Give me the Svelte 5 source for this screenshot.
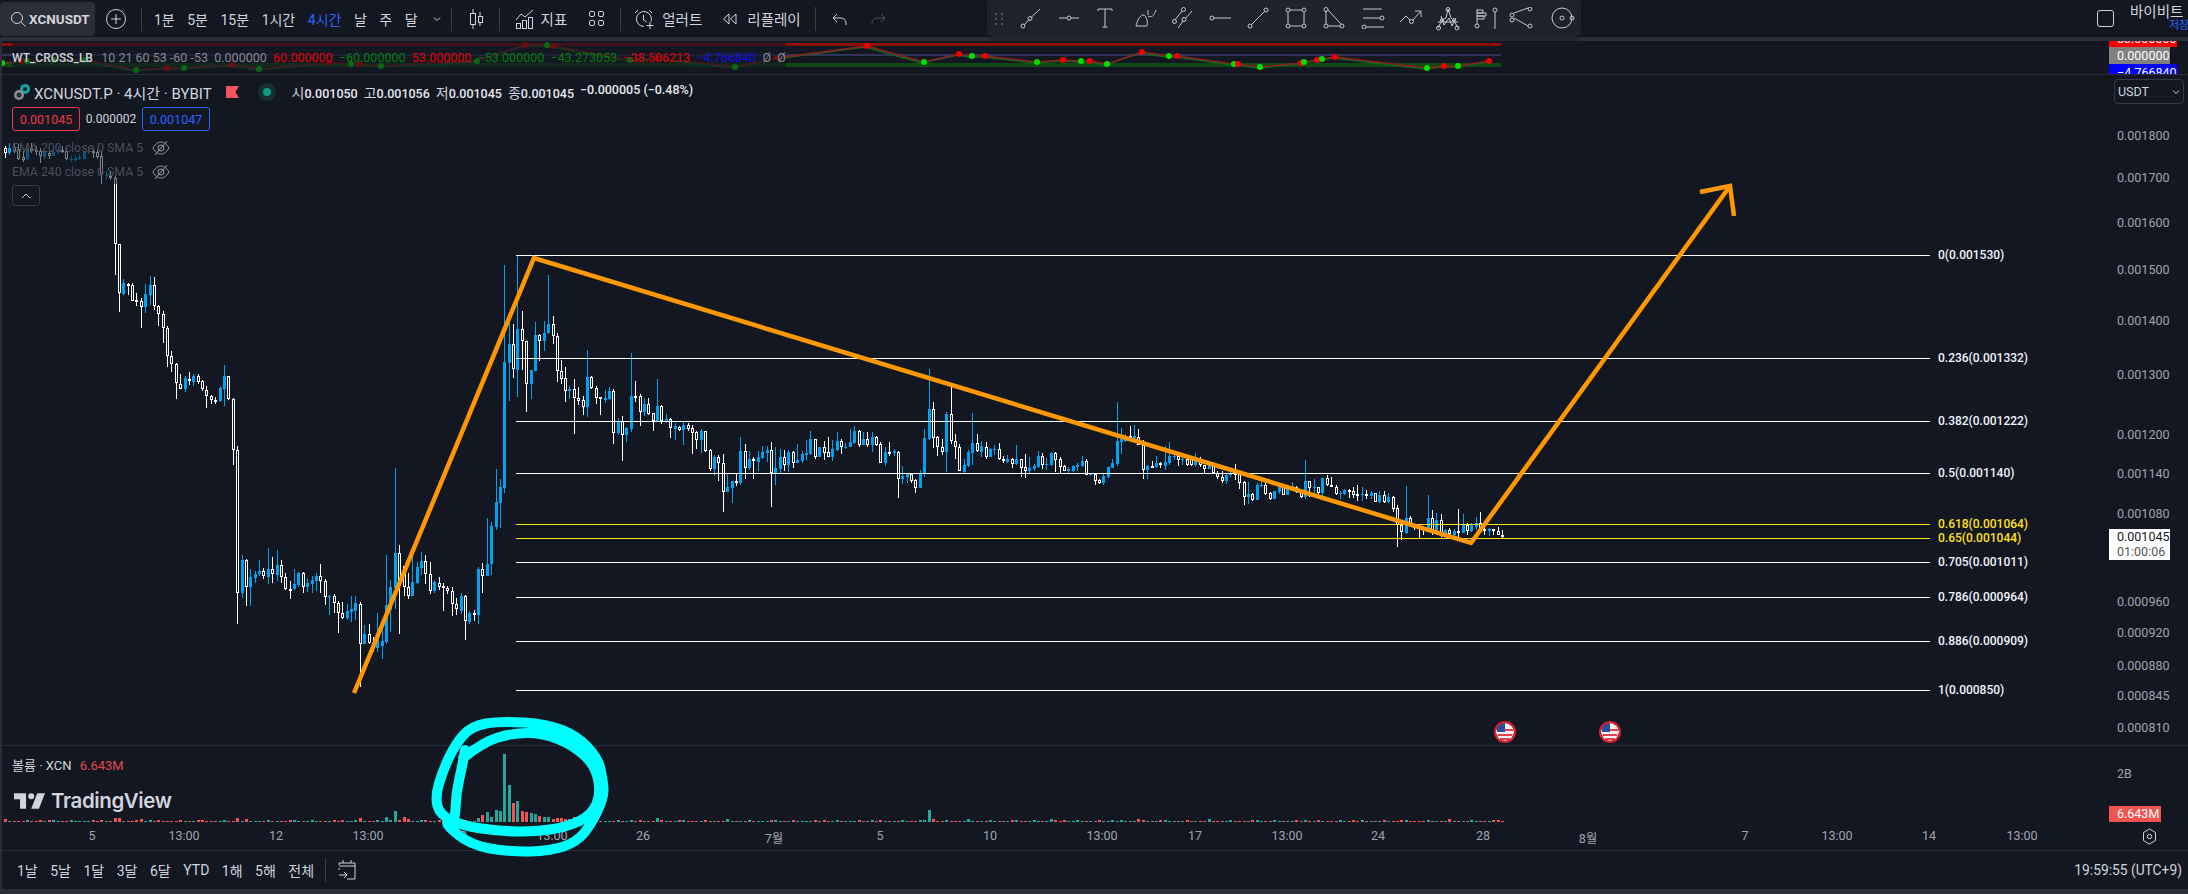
<script>
	// Candle data read off the chart: type, body top, body bottom, high, low
	const seg1 = `W50,64,45,78 B50,64,35,70 W48,58,40,65 W52,80,40,85 W76,84,60,90 B52,82,50,84 W50,58,35,65 W55,60,45,70 W58,74,50,92 B62,76,55,80 W63,72,58,80 B62,72,55,74 B55,62,45,68 W55,58,45,65 W60,82,50,85 B80,83,72,90 B78,84,70,90 B76,82,66,84 B62,80,58,82 B58,62,48,66 W60,62,52,78 W62,76,55,82 W74,122,60,150 B125,128,115,140 W128,134,115,140 W134,320,130,405 W320,455,320,510 B428,458,418,462 W430,436,428,462 W435,478,428,480 W476,480,455,492 W480,495,470,553 B460,496,432,512 B435,462,408,490 W435,492,412,505 W492,516,490,548 W516,555,508,596 W555,632,550,664 W632,656,618,678 W656,708,652,752 W710,724,684,724 B695,724,688,734 W696,704,678,714 B690,706,682,716 W690,706,684,712 W704,726,700,732 W727,744,718,777 W744,756,742,766 W755,762,748,768 B722,760,716,762 B690,724,658,772 W690,752,688,756 W752,895,750,938 W895,1295,885,1382 B1205,1295,1190,1310 W1205,1280,1200,1332 B1252,1280,1230,1332 B1244,1254,1235,1268 B1236,1244,1205,1248 W1236,1250,1225,1258 B1230,1252,1170,1272 W1230,1244,1195,1268 B1218,1246,1176,1262 W1218,1252,1205,1268 W1252,1286,1240,1288 W1284,1286,1262,1312 B1272,1286,1230,1288 B1240,1274,1238,1280 W1240,1280,1238,1296 B1268,1280,1255,1294 B1260,1272,1250,1296 B1250,1264,1240,1292 W1250,1262,1216,1296 W1262,1308,1258,1330 B1304,1308,1302,1358 W1304,1324,1298,1352 W1324,1352,1318,1408 W1352,1366,1322,1370 B1348,1366,1328,1372 B1342,1350,1304,1378 B1324,1346,1306,1372 W1326,1438,1322,1560 B1412,1438,1386,1438 W1412,1436,1384,1438 W1436,1450,1420,1462 B1416,1450,1352,1462 B1430,1446,1390,1480 B1330,1434,1190,1438 B1280,1345,1260,1406 B1185,1282,946,1340 W1185,1276,1162,1410 W1222,1280,1220,1306 W1280,1304,1240,1312 B1266,1304,1185,1306 B1224,1268,1210,1270 B1206,1226,1182,1246 W1208,1244,1190,1270 W1244,1292,1210,1298 B1266,1292,1260,1296 W1268,1280,1252,1288 W1278,1280,1268,1346 W1282,1290,1276,1300 W1290,1326,1280,1360 W1326,1342,1310,1358 B1304,1346,1296,1354 W1306,1376,1302,1428 B1352,1378,1348,1382 W1352,1356,1344,1376 B1230,1358,1224,1382 W1230,1248,1212,1296 B1214,1248,1086,1250 B1110,1214,1098,1246 B1042,1112,950,1120 B1000,1044,976,1114 B650,1002,378,1016 B600,652,535,758 W600,670,542,695 B558,672,350,748 W558,592,508,672 W592,710,592,790 B672,710,672,752 B575,675,538,674 W575,590,572,648 B568,592,535,620 B544,568,406,570 W544,576,520,600 W576,676,568,706`;
	const seg2 = `W363,386,330,402 W384,422,352,456 B418,422,408,448 W418,445,388,552 W445,452,412,464 W450,470,438,496 B381,470,300,500 W381,415,378,418 W415,444,408,462 W442,448,440,495 B445,450,420,458 B423,446,410,450 W423,548,418,582 B514,548,505,556 W514,555,498,632 B534,555,530,576 B438,537,310,545 W438,440,393,456 W438,486,432,528 B462,486,445,498 W463,492,445,496 W490,514,488,542 B468,514,388,516 W468,514,466,522 B508,516,492,520 W508,535,505,565 B528,538,518,570 W530,540,527,542 B526,540,516,584 W526,536,520,542 W535,548,525,612 W546,570,542,597 B544,570,538,610 W544,603,542,606 W600,656,598,664 B622,656,615,678 W622,638,615,692 W638,725,612,786 B712,725,672,727 B694,714,692,758 W693,697,672,708 B604,698,562,705 W604,654,582,686 B628,654,604,660 W628,634,620,686 B622,636,604,662 B606,624,588,626 B600,608,588,636 W601,668,576,770 B655,670,592,704 B622,656,596,668 W622,644,600,664 B606,644,600,665 W606,638,604,654 B630,638,582,640 B612,634,604,640 B610,614,570,630 B568,612,544,614 W568,622,566,626 B592,620,590,622 W592,608,574,630 W606,620,560,622 B598,622,570,632 B573,600,546,602 W574,590,566,612 B590,594,578,598 B576,590,538,592 B544,578,528,582 W544,584,540,592 B568,584,546,586 W568,584,545,592 B560,586,546,606 W562,584,558,588 W582,638,575,640 B606,638,590,648 W606,608,576,618 B604,608,598,618 W606,686,603,744 B678,686,648,702 B670,682,668,698 W672,692,668,698 W690,713,688,728 B670,713,660,715 B564,672,538,680 B477,567,358,570 W478,564,456,594 W562,590,558,618 W590,606,568,614 B492,606,486,665 W492,574,405,582 W574,590,552,626 W590,662,582,664 B645,665,628,668 B606,648,600,650 B580,608,490,645 W580,602,552,605 B588,606,574,620 W590,620,576,626 B596,620,594,622 B597,600,584,614 W598,628,578,630 W628,634,618,638 B628,636,616,638 W628,642,624,654 B628,642,586,644 W628,654,626,680 W652,662,612,684 B655,664,620,672 B648,658,642,664 B618,652,602,654`;
	const seg3 = `W318,346,310,358 B342,345,324,360 B309,346,306,348 W310,330,306,366 W328,350,322,370 W348,362,344,364 B358,362,352,370 B348,362,346,366 B346,350,340,362 B333,348,318,350 W333,374,326,376 B372,374,368,378 W372,392,370,405 W390,398,386,402 B378,400,372,404 B351,380,348,384 B340,354,328,355 B273,342,156,348 B268,276,234,312 B258,272,252,276 W258,262,228,264 B258,264,225,268 W260,284,237,286 W284,360,270,387 B348,360,346,387 W348,350,333,354 B340,352,318,354 W340,346,336,354 B336,348,288,360 B318,340,276,345 B318,320,305,331 W319,330,316,348 B326,328,322,345 W327,346,324,348 W327,346,322,348 B326,346,310,350 W326,346,322,350 W346,356,344,370 B338,356,332,358 W340,370,336,372 W368,382,362,386 W382,392,364,398 B374,394,370,402 B368,376,362,382 W370,372,342,390 W372,398,368,416 W396,440,394,464 B432,440,396,462 W432,450,428,454 B405,450,398,450 B405,408,390,412 W406,432,400,436 W430,446,426,450 B424,446,422,448 B406,426,402,432 W406,434,404,436 B416,434,404,436 B408,420,396,424 W410,426,408,430 W424,440,420,444 B393,440,330,446 W394,414,392,440 B410,414,388,430 W412,430,410,438 B385,430,384,442 W385,405,376,408 W404,410,380,412 W410,432,406,436 B428,432,422,446 B420,432,418,436 W421,424,418,444 W424,434,410,444 W433,436,405,452 B432,436,412,454 W433,436,420,448 B428,438,422,446 W430,455,428,457 B434,456,422,458 W435,455,424,458 B442,456,430,458 W442,476,438,486 W475,525,466,590 W525,545,522,570 B504,548,408,552 W505,527,498,530 W527,530,522,540 W530,536,524,566 W534,540,532,555 B504,540,435,544 W505,540,480,554 B510,546,490,552 W511,552,492,560 B540,552,538,558 W540,553,534,556 B543,555,538,570 W544,547,477,564 B525,548,492,550 W526,542,520,554 B526,542,520,546 B520,530,502,540 W520,540,486,540 W538,540,534,554 B537,542,534,558 W538,544,536,554 W544,554,532,556 W554,562,540,564`;

	function parseSeg(str, startX, originY, scaleY) {
		const py = (v) => Math.round(originY + v / scaleY);
		return str.split(' ').map((item, j) => {
			const [t, b, h, l] = item.slice(1).split(',').map(Number);
			const x = startX + j * 4.38;
			return { up: item[0] === 'B', x, ix: Math.round(x), t: py(t), b: py(b), h: py(h), l: py(l) };
		});
	}

	const candles = [
		...parseSeg(seg1, 5, 130, 2.8),
		...parseSeg(seg2, 560.7, 250, 3),
		...parseSeg(seg3, 1042.1, 350, 3)
	];

	// bars that stand out in the volume pane: x position and height
	const volPeaks = [[40,2],[114,4],[118,4],[139,3],[235,4],[358,4],[385,5],[394,11],[403,5],[407,3],[425,2],[477.700,4],[481.700,7],[486.700,10],[490.700,5],[495.300,12],[499.300,11],[503.700,68],[508.300,37],[512.700,19],[516.700,21],[521,11],[525.700,10],[529.700,9],[534.300,8],[538.700,6],[543,5],[547.700,5],[551.700,3],[556,4],[560.700,4],[565,3],[569.300,3],[573.700,5],[578.300,3],[657,4],[929,12],[933,3],[1050,3],[1140,3]];
	const volumes = candles.map((c, i) => {
		let best = null;
		for (const p of volPeaks) {
			const dist = Math.abs(p[0] - c.x);
			if (dist <= 2.2 && (!best || dist < best.dist)) best = { dist, h: p[1] };
		}
		const h = best ? best.h : 1 + ((i * 7) % 5 === 0 ? 1 : 0) + ((i * 13) % 11 === 0 ? 1 : 0);
		return { x: c.ix - 1, h, up: c.up };
	});

	const fibs = [
		{ y: 255, label: '0(0.001530)' },
		{ y: 358, label: '0.236(0.001332)' },
		{ y: 421, label: '0.382(0.001222)' },
		{ y: 473, label: '0.5(0.001140)' },
		{ y: 524, label: '0.618(0.001064)', gold: true },
		{ y: 538, label: '0.65(0.001044)', gold: true },
		{ y: 562, label: '0.705(0.001011)' },
		{ y: 597, label: '0.786(0.000964)' },
		{ y: 641, label: '0.886(0.000909)' },
		{ y: 690, label: '1(0.000850)' }
	];

	const prices = [
		['0.001800', 135], ['0.001700', 177], ['0.001600', 222], ['0.001500', 269], ['0.001400', 320],
		['0.001300', 374], ['0.001200', 434], ['0.001140', 473], ['0.001080', 513], ['0.000960', 601],
		['0.000920', 632], ['0.000880', 665], ['0.000845', 695], ['0.000810', 727]
	];

	const times = [
		['5', 92], ['13:00', 184], ['12', 276], ['13:00', 368], ['19', 460], ['13:00', 552], ['26', 643],
		['7월', 774], ['5', 880], ['10', 990], ['13:00', 1102], ['17', 1195], ['13:00', 1287], ['24', 1378],
		['28', 1483], ['8월', 1588], ['7', 1745], ['13:00', 1837], ['14', 1929], ['13:00', 2022]
	];

	const wtDots = [
		[2,63,'g'],[22,61,'r'],[27,61,'g'],[54,60,'g'],[84,60,'g'],[136,70,'g'],[167,68,'r'],[184,68,'g'],[232,65,'r'],[259,69,'g'],
		[329,63,'r'],[351,64,'g'],[359,64,'r'],[381,66,'g'],[477,61,'g'],[525,45,'r'],[547,45,'g'],[553,46,'r'],[630,60,'g'],[657,58,'r'],
		[735,67,'g'],[777,58,'r'],[867,46,'r'],[924,62,'g'],[959,54,'r'],[972,56,'g'],[985,56,'r'],[1037,62,'g'],[1063,60,'r'],[1081,61,'g'],
		[1090,61,'r'],[1107,64,'g'],[1142,52,'r'],[1169,56,'g'],[1177,56,'r'],[1234,64,'g'],[1238,64,'r'],[1260,67,'g'],[1301,63,'r'],[1304,62,'g'],
		[1317,60,'r'],[1322,59,'g'],[1335,57,'r'],[1427,68,'g'],[1444,66,'r'],[1458,66,'g'],[1489,61,'r']
	];
	const wtPath = 'M' + wtDots.map((d) => `${d[0]} ${d[1]}`).join('L');

	const intervals = ['1분', '5분', '15분', '1시간', '4시간', '날', '주', '달'];
	const ranges = ['1날', '5날', '1달', '3달', '6달', 'YTD', '1해', '5해', '전체'];
	const wtValues = [
		['0.000000', 'grey'], ['60.000000', 'red'], ['−60.000000', 'green'], ['53.000000', 'red'],
		['−53.000000', 'green'], ['−43.273053', 'green'], ['−38.506213', 'red'], ['−4.766840', 'blue'], ['Ø', 'grey'], ['Ø', 'grey']
	];

	// hand drawn circle around the volume spike
	const scribble = [[463,758],[483,742],[513,733],[543,733],[573,745],[595,765],[601,793],[592,815],[567,827],[533,832],[500,831],[463,826],[440,815],[435,797],[443,770],[456,743],[472,726],[500,721],[547,724],[577,736],[598,758],[603,780],[604,797],[592,823],[577,842],[550,851],[510,852],[470,845],[443,822],[455,823],[456,793],[463,763],[467,737]];
	function smooth(pts) {
		let d = `M${pts[0][0]} ${pts[0][1]}`;
		for (let i = 1; i < pts.length - 1; i++) {
			const mx = (pts[i][0] + pts[i + 1][0]) / 2;
			const my = (pts[i][1] + pts[i + 1][1]) / 2;
			d += `Q${pts[i][0]} ${pts[i][1]} ${mx} ${my}`;
		}
		return d;
	}
	const scribblePath = smooth(scribble);
</script>

<div class="page">
	<header class="topbar">
		<div class="search">
			<svg width="16" height="16" viewBox="0 0 16 16"><circle cx="7" cy="7" r="5.5" /><path d="M11 11l4.500 4.500" /></svg>
			<span>XCNUSDT</span>
		</div>
		<svg class="plus" width="20" height="20" viewBox="0 0 20 20"><circle cx="10" cy="10" r="9.500" /><path d="M10 5v10M5 10h10" /></svg>
		<i class="sep first"></i>
		<div class="intervals">
			{#each intervals as item}
				<span class:active={item === '4시간'}>{item}</span>
			{/each}
		</div>
		<svg class="chev" width="10" height="10" viewBox="0 0 10 10"><path d="M2 3.500l3 3 3-3" /></svg>
		<i class="sep tight"></i>
		<svg class="ico candle-ico" width="16" height="20" viewBox="0 0 16 20"><path d="M4 0v4M4 16v4M11 3v4M11 13v4" /><rect x="1.500" y="4.500" width="5" height="11" /><rect x="9.500" y="7.500" width="4" height="6" /></svg>
		<i class="sep tight"></i>
		<svg class="ico ind-ico" width="20" height="20" viewBox="0 0 20 20"><path d="M1 11l5-6 4 3 8-7" /><rect x="1.500" y="14.500" width="4" height="5" /><rect x="7.500" y="11.500" width="4" height="8" /><rect x="13.500" y="8.500" width="4" height="11" /></svg>
		<span class="label ind-label">지표</span>
		<svg class="ico grid-ico" width="17" height="17" viewBox="0 0 17 17"><rect x="1.500" y="1.500" width="5" height="5" rx="1.500" /><rect x="10.500" y="1.500" width="5" height="5" rx="1.500" /><rect x="1.500" y="10.500" width="5" height="5" rx="1.500" /><rect x="10.500" y="10.500" width="5" height="5" rx="1.500" /></svg>
		<i class="sep alert-sep"></i>
		<svg class="ico alert-ico" width="21" height="20" viewBox="0 0 21 20"><path d="M10 17.500a7.500 7.500 0 1 1 7-5M9.500 6v5l3 2M1 4l3-3M15 1l3 3M16 13v7M12.500 16.500h7" /></svg>
		<span class="label alert-label">얼러트</span>
		<svg class="ico replay-ico" width="15" height="12" viewBox="0 0 15 12"><path d="M7 1L1.500 6 7 11zM14 1L8.500 6 14 11z" /></svg>
		<span class="label replay-label">리플레이</span>
		<i class="sep undo-sep"></i>
		<svg class="ico undo-ico" width="15" height="12" viewBox="0 0 15 12"><path d="M5 1L1 5l4 4M1 5h8a5 5 0 0 1 5 5v2" /></svg>
		<svg class="ico redo-ico" width="15" height="12" viewBox="0 0 15 12"><path d="M10 1l4 4-4 4M14 5H6a5 5 0 0 0-5 5v2" /></svg>

		<div class="account">
			<i class="checkbox"></i>
			<div class="account-text">
				<span>바이비트</span>
				<span class="saved">저장</span>
			</div>
		</div>

		<nav class="drawbar">
			<svg class="grip" width="8" height="14" viewBox="0 0 8 14"><path d="M0 1h2v2H0zM6 1h2v2H6zM0 6h2v2H0zM6 6h2v2H6zM0 11h2v2H0zM6 11h2v2H6z" /></svg>
			<svg style="left:33px" width="22" height="22" viewBox="0 0 22 22"><path d="M4 18L9 12.500M11 10.500L20 2" /><circle cx="3" cy="19" r="2" /><circle cx="10" cy="11.500" r="2" /></svg>
			<svg style="left:71px" width="22" height="22" viewBox="0 0 22 22"><path d="M1 11h8M13 11h8" /><circle cx="11" cy="11" r="2" /></svg>
			<svg style="left:110px" width="16" height="22" viewBox="0 0 16 22"><path d="M1 4V2h14v2M8 2v18M5.500 20h5" /></svg>
			<svg style="left:147px" width="24" height="22" viewBox="0 0 24 22"><path d="M2 19h11c1-6-1-11-4-11-4 1-6 7-7 11zM14 9c3 2 6 0 8-6M14 3c0 2 0 4 0 5" /></svg>
			<svg style="left:185px" width="22" height="22" viewBox="0 0 22 22"><path d="M3 13L10 4M6 21l5-7M13 12l7-8" /><circle cx="2.500" cy="14.500" r="2" /><circle cx="11.500" cy="2.500" r="2" /><circle cx="12" cy="12.500" r="2" /></svg>
			<svg style="left:222px" width="22" height="22" viewBox="0 0 22 22"><path d="M5 11h17" /><circle cx="3" cy="11" r="2" /></svg>
			<svg style="left:260px" width="22" height="22" viewBox="0 0 22 22"><path d="M4 18L18 4" /><circle cx="3" cy="19" r="2" /><circle cx="19" cy="3" r="2" /></svg>
			<svg style="left:298px" width="22" height="22" viewBox="0 0 22 22"><path d="M5 3h12M5 19h12M3 5v12M19 5v12" /><circle cx="3" cy="3" r="2" /><circle cx="19" cy="3" r="2" /><circle cx="3" cy="19" r="2" /><circle cx="19" cy="19" r="2" /></svg>
			<svg style="left:336px" width="22" height="22" viewBox="0 0 22 22"><path d="M3 4v13M5 19h12M5 3l13 14" /><circle cx="3" cy="2.500" r="2" /><circle cx="3" cy="19" r="2" /><circle cx="19" cy="19" r="2" /></svg>
			<svg style="left:374px" width="24" height="22" viewBox="0 0 24 22"><path d="M3 2h18M2 11h17M5 20h18M2 2h1" /><circle cx="21" cy="11" r="2" /><circle cx="3" cy="20" r="2" /></svg>
			<svg style="left:412px" width="24" height="22" viewBox="0 0 24 22"><path d="M1 15l6-6 4 4M14 13l7-8M16 4h6v6" /><circle cx="12.500" cy="14.500" r="2" /></svg>
			<svg style="left:449px" width="24" height="24" viewBox="0 0 24 24"><path d="M2 21l4-8 4-2 2-9 3 9 3 3 4 7M2 15h20M5 9l3 9 5-7 3 8 4-8" /><circle cx="12" cy="2.500" r="2" /><circle cx="2.500" cy="21" r="2" /><circle cx="21" cy="21" r="2" /><circle cx="6" cy="13" r="1.500" /><circle cx="18" cy="13" r="1.500" /></svg>
			<svg style="left:487px" width="14" height="22" viewBox="0 0 14 22"><path d="M3 17V2M3 3h6v3H3M3 6h9v3H3M3 9h7v3H3" /><circle cx="3" cy="19" r="2" /></svg>
			<svg style="left:504px" width="8" height="22" viewBox="0 0 8 22"><path d="M4 5v17" /><circle cx="4" cy="3" r="2" /></svg>
			<svg style="left:522px" width="24" height="22" viewBox="0 0 24 22"><path d="M5 6l14-5M5 11l14 8" /><circle cx="3" cy="8" r="2" /><circle cx="3" cy="13" r="2" /><circle cx="21" cy="2" r="2" /><circle cx="21" cy="19" r="2" /></svg>
			<svg style="left:564px" width="24" height="22" viewBox="0 0 24 22"><circle cx="11" cy="11" r="10" /><circle cx="11" cy="11" r="2" /><circle cx="21" cy="11" r="2" /></svg>
		</nav>
	</header>

	<div class="panes">
		<section class="row wt">
			<div class="plot">
				<svg class="canvas" viewBox="2 41 2107 33" width="2107" height="33">
					<rect x="2" y="43" width="1499" height="3" fill="#8c0b0b" />
					<rect x="2" y="63" width="1499" height="4" fill="#0d4a14" />
					<path d="M2 55H1501" stroke="#3a3f70" stroke-width="1.500" />
					<path d={wtPath} transform="translate(-2 1)" fill="none" stroke="#0b6a1e" stroke-width="1.500" />
					<path d={wtPath} fill="none" stroke="#8e1f1f" stroke-width="1.500" />
					{#each wtDots as d}
						<circle cx={d[0]} cy={d[1]} r="3" fill={d[2] === 'r' ? '#f00000' : '#00e000'} />
					{/each}
				</svg>
				<div class="wt-legend">
					<b>WT_CROSS_LB</b>
					<span class="wt-params">10 21 60 53 -60 -53</span>
					{#each wtValues as v}
						<span class={v[1]}>{v[0]}</span>
					{/each}
				</div>
			</div>
			<div class="axis">
				<span class="wt-tag tag-red">53.000000</span>
				<span class="wt-tag tag-blue">−4.766840</span>
				<span class="wt-tag tag-grey">0.000000</span>
			</div>
		</section>

		<section class="row main">
			<div class="plot">
				<svg class="canvas" viewBox="2 75 2107 670" width="2107" height="670">
					{#each candles as c}
						<path d="M{c.ix + 0.5} {c.h}V{c.l}" class={c.up ? 'wick up' : 'wick'} />
						{#if c.up}
							<rect x={c.ix - 1} y={c.t} width="3" height={Math.max(c.b - c.t, 1)} class="body-up" />
						{:else}
							<rect x={c.ix - 0.5} y={c.t + 0.5} width="2" height={Math.max(c.b - c.t - 1, 1)} class="body-down" />
						{/if}
					{/each}
					{#each fibs as f}
						<path d="M516 {f.y + 0.5}H1930" class="fib" class:gold={f.gold} />
						<text x="1938" y={f.y + 4} class="fib-text" class:gold={f.gold}>{f.label}</text>
					{/each}
					{#each [1505, 1610] as fx}
						<g transform="translate({fx} 732)">
							<circle r="9" fill="#f4f4f4" />
							<path d="M-8 -2H8M-7.500 3H7.500M-5 7H5" stroke="#e2434b" stroke-width="2" />
							<path d="M-8 -5a9 9 0 0 1 8 -4V0H-8z" fill="#2b4fa0" />
							<circle r="10" fill="none" stroke="#d9202f" stroke-width="2" />
						</g>
					{/each}
				</svg>

				<div class="legend">
					<div class="symbol-row">
						<svg class="coin" width="18" height="18" viewBox="0 0 18 18"><circle cx="12" cy="6" r="5" fill="#12a5a0" /><circle cx="12" cy="6" r="2" fill="#131722" /><circle cx="6" cy="12" r="5" fill="#8a8e99" /><circle cx="6" cy="12" r="2.500" fill="#2a2e39" /></svg>
						<span class="symbol">XCNUSDT.P · 4시간 · BYBIT</span>
						<svg class="flag" width="13" height="12" viewBox="0 0 13 12"><path d="M0 0h13L9.500 6 13 12H0z" fill="#f7525f" /></svg>
						<span class="status"><i></i></span>
						<span class="ohlc">
							<span>시<b>0.001050</b></span>
							<span>고<b>0.001056</b></span>
							<span>저<b>0.001045</b></span>
							<span>종<b>0.001045</b></span>
							<b>−0.000005 (−0.48%)</b>
						</span>
					</div>
					<div class="quote-row">
						<span class="chip sell">0.001045</span>
						<span class="spread">0.000002</span>
						<span class="chip buy">0.001047</span>
					</div>
					<div class="study">
						<span>EMA 200 close 0 SMA 5</span>
						<svg width="18" height="18" viewBox="0 0 18 18"><path d="M1 9c3-5 6-6 8-6s5 1 8 6c-3 5-6 6-8 6s-5-1-8-6z" /><circle cx="9" cy="9" r="3" /><path d="M3 16L15 2" /></svg>
					</div>
					<div class="study">
						<span>EMA 240 close 0 SMA 5</span>
						<svg width="18" height="18" viewBox="0 0 18 18"><path d="M1 9c3-5 6-6 8-6s5 1 8 6c-3 5-6 6-8 6s-5-1-8-6z" /><circle cx="9" cy="9" r="3" /><path d="M3 16L15 2" /></svg>
					</div>
					<button class="collapse" aria-label="접기">
						<svg width="10" height="6" viewBox="0 0 10 6"><path d="M1 5l4-4 4 4" /></svg>
					</button>
				</div>
			</div>
			<div class="axis">
				<div class="unit">USDT <svg width="8" height="6" viewBox="0 0 8 6"><path d="M1 1.500l3 3 3-3" /></svg></div>
				{#each prices as p}
					<span class="price" style="top:{p[1] - 75}px">{p[0]}</span>
				{/each}
				<div class="last">
					<span>0.001045</span>
					<span class="countdown">01:00:06</span>
				</div>
			</div>
		</section>

		<section class="row vol">
			<div class="plot">
				<svg class="canvas" viewBox="2 746 2107 76" width="2107" height="76">
					{#each volumes as v}
						<rect x={v.x} y={822 - v.h} width="3" height={v.h} fill={v.up ? '#26a69a' : '#f05350'} />
					{/each}
				</svg>
				<div class="vol-legend">볼륨 · XCN <span>6.643M</span></div>
				<div class="watermark">
					<svg width="31" height="16" viewBox="0 0 36 18"><path d="M0 0h14v18H7V7H0zM27 0h9l-7 18h-9z" fill="#d1d4dc" /><circle cx="20" cy="3.500" r="3.500" fill="#d1d4dc" /></svg>
					<span>TradingView</span>
				</div>
			</div>
			<div class="axis">
				<span class="vol-scale">2B</span>
				<span class="vol-tag">6.643M</span>
			</div>
		</section>

		<section class="row timeaxis">
			<div class="plot">
				{#each times as t}
					<span class="time" style="left:{t[1] - 2}px">{t[0]}</span>
				{/each}
			</div>
			<div class="axis">
				<svg class="gear" width="15" height="17" viewBox="0 0 15 17"><path d="M7.500 1l6 3.500v8l-6 3.500-6-3.500v-8z" /><circle cx="7.500" cy="8.500" r="2.200" /></svg>
			</div>
		</section>

		<footer class="rangebar">
			{#each ranges as r}
				<span>{r}</span>
			{/each}
			<i class="sep range-sep"></i>
			<svg class="ico" width="18" height="20" viewBox="0 0 18 20"><path d="M1 5V3h16v16H9M1 6h16M5 0v3M13 0v3M1 8v2M1 15h8M6 12l3 3-3 3" /></svg>
			<span class="clock">19:59:55 (UTC+9)</span>
		</footer>
	</div>

	<div class="bottom-strip"></div>

	<svg class="drawings" viewBox="0 0 2188 894" width="2188" height="894">
		<polyline points="354,693 534,258 1471,543 1730,186" class="arrow" />
		<polyline points="1700,192 1730,186 1734,216" class="arrow" />
		<path d={scribblePath} class="scribble" />
	</svg>
</div>

<style>
	:global(body) {
		margin: 0;
		background: #131722;
		overflow: hidden;
	}

	.page {
		position: relative;
		width: 2188px;
		height: 894px;
		display: flex;
		flex-direction: column;
		background: #131722;
		color: #d1d4dc;
		font-family: Roboto, 'Noto Sans CJK KR', sans-serif;
		font-size: 13px;
		overflow: hidden;
	}

	.topbar {
		position: relative;
		flex: 0 0 37px;
		display: flex;
		align-items: center;
		border-bottom: 4px solid #2a2e39;
		box-sizing: content-box;
		height: 37px;
	}

	.topbar svg,
	.rangebar svg,
	.study svg,
	.collapse svg,
	.unit svg,
	.gear {
		fill: none;
		stroke: #d1d4dc;
		stroke-width: 1;
		flex: none;
	}

	.search {
		width: 95px;
		height: 34px;
		margin-top: 1px;
		box-sizing: border-box;
		padding-left: 10px;
		display: flex;
		align-items: center;
		gap: 3px;
		background: #2a2e39;
		border-radius: 4px;
		font-weight: 700;
		font-size: 13.500px;
	}

	.plus {
		margin-left: 11px;
	}

	.sep {
		flex: none;
		width: 1px;
		height: 24px;
		background: #3a3e4a;
	}

	.sep.first {
		margin-left: 15px;
	}

	.intervals {
		margin-left: 12px;
		display: flex;
		gap: 12.500px;
		font-size: 14px;
	}

	.intervals .active {
		color: #2962ff;
	}

	.chev {
		margin-left: 14px;
	}

	.sep.tight {
		margin-left: 9px;
	}

	.candle-ico {
		margin-left: 17px;
	}

	.candle-ico + .sep {
		margin-left: 14px;
	}

	.ind-ico {
		margin-left: 15px;
	}

	.label {
		font-size: 14.500px;
	}

	.ind-label {
		margin-left: 6px;
	}

	.grid-ico {
		margin-left: 21px;
	}

	.alert-sep {
		margin-left: 15px;
	}

	.alert-ico {
		margin-left: 13px;
	}

	.alert-label {
		margin-left: 7px;
	}

	.replay-ico {
		margin-left: 20px;
	}

	.replay-label {
		margin-left: 10px;
	}

	.undo-sep {
		margin-left: 14px;
	}

	.undo-ico {
		margin-left: 16px;
	}

	.redo-ico {
		margin-left: 24px;
		stroke: #50535e !important;
	}

	.account {
		margin-left: auto;
		display: flex;
		align-items: center;
		gap: 16px;
		width: 91px;
		flex: none;
	}

	.checkbox {
		flex: none;
		width: 17px;
		height: 17px;
		box-sizing: border-box;
		border: 1px solid #d1d4dc;
		border-radius: 3px;
	}

	.account-text {
		display: flex;
		flex-direction: column;
		line-height: 13px;
		white-space: nowrap;
		font-size: 14.500px;
	}

	.saved {
		margin-left: 39px;
		font-size: 11px;
		color: #2962ff;
	}

	.drawbar {
		position: absolute;
		left: 987px;
		top: 0;
		width: 594px;
		height: 38px;
		background: #1e222d;
		border-radius: 0 0 7px 7px;
		box-shadow: 0 2px 4px rgba(0, 0, 0, 0.25);
	}

	.drawbar svg {
		position: absolute;
		top: 7px;
		stroke: #c4c7d0;
	}

	.drawbar .grip {
		left: 8px;
		top: 12px;
		fill: #50535e;
		stroke: none;
	}

	.panes {
		flex: 1;
		display: flex;
		flex-direction: column;
		border-left: 2px solid #2a2e39;
	}

	.row {
		display: grid;
		grid-template-columns: 2107px 79px;
		position: relative;
	}

	.wt {
		height: 33px;
		border-bottom: 1px solid #2a2e39;
		overflow: hidden;
	}

	.main {
		height: 670px;
		border-bottom: 1px solid #2a2e39;
	}

	.vol {
		height: 76px;
	}

	.timeaxis {
		height: 28px;
		border-bottom: 1px solid #2a2e39;
	}

	.plot,
	.axis {
		position: relative;
	}

	.canvas {
		display: block;
	}

	.wick {
		stroke: #fff;
		stroke-width: 1;
		shape-rendering: crispEdges;
	}

	.wick.up {
		stroke: #00a2f2;
	}

	.body-up {
		fill: #00a2f2;
		shape-rendering: crispEdges;
	}

	.body-down {
		fill: #131722;
		stroke: #fff;
		stroke-width: 1;
		shape-rendering: crispEdges;
	}

	.fib {
		stroke: #fff;
		stroke-width: 1;
		shape-rendering: crispEdges;
	}

	.fib.gold {
		stroke: #ffe11a;
	}

	.fib-text {
		font-size: 12px;
		font-weight: 500;
		fill: #f0f3fa;
	}

	.fib-text.gold {
		fill: #ffe11a;
	}

	.wt-legend {
		position: absolute;
		top: 0;
		left: 10px;
		width: 774px;
		height: 33px;
		display: flex;
		align-items: center;
		gap: 6.300px;
		font-size: 12.500px;
		white-space: nowrap;
		background: rgba(19, 23, 34, 0.6);
	}

	.wt-legend b {
		font-size: 12px;
		font-weight: 500;
		color: #d1d4dc;
		margin-right: 2px;
	}

	.wt-params,
	.grey {
		color: #868993;
	}

	.red {
		color: #e00000;
	}

	.green {
		color: #00800a;
	}

	.blue {
		color: #1010f0;
	}

	.wt-tag {
		position: absolute;
		left: 0;
		width: 68px;
		padding-left: 8px;
		box-sizing: border-box;
		color: #fff;
		font-size: 12.500px;
		line-height: 17px;
	}

	.tag-red {
		top: -11px;
		background: #f00;
	}

	.tag-blue {
		top: 23px;
		background: #00f;
	}

	.tag-grey {
		top: 6px;
		width: 61px;
		background: #808080;
	}

	.legend {
		position: absolute;
		left: 10px;
		top: 0;
		pointer-events: none;
	}

	.symbol-row {
		position: relative;
		height: 34px;
		display: flex;
		align-items: center;
		white-space: nowrap;
	}

	.coin {
		margin-left: 1px;
		flex: none;
	}

	.symbol {
		margin-left: 3px;
		font-size: 15px;
	}

	.flag {
		margin-left: 14px;
		flex: none;
	}

	.status {
		margin-left: 19px;
		width: 18px;
		height: 18px;
		flex: none;
		border-radius: 50%;
		background: #16302f;
		display: flex;
		align-items: center;
		justify-content: center;
	}

	.status i {
		width: 8px;
		height: 8px;
		border-radius: 50%;
		background: #129a83;
	}

	.ohlc {
		margin-left: 16px;
		display: flex;
		gap: 6px;
		font-size: 14px;
	}

	.ohlc b {
		font-size: 12.500px;
		font-weight: 500;
		color: #e6e8ee;
	}

	.quote-row {
		margin-top: -2px;
		height: 24px;
		display: flex;
		align-items: center;
		font-size: 12.500px;
	}

	.chip {
		width: 68px;
		height: 24px;
		box-sizing: border-box;
		border: 1px solid;
		border-radius: 3px;
		display: flex;
		align-items: center;
		justify-content: center;
	}

	.sell {
		color: #f23645;
		border-color: #f23645;
	}

	.buy {
		color: #2962ff;
		border-color: #2962ff;
	}

	.spread {
		width: 62px;
		text-align: center;
		font-size: 12px;
	}

	.study {
		width: 160px;
		height: 24px;
		display: flex;
		align-items: center;
		justify-content: space-between;
		font-size: 12.300px;
		color: #4c4f5a;
		background: rgba(19, 23, 34, 0.55);
		white-space: nowrap;
	}

	.quote-row + .study {
		margin-top: 5px;
	}

	.study svg {
		stroke: #9a9da6;
		margin-right: 2px;
	}

	.collapse {
		display: flex;
		align-items: center;
		justify-content: center;
		width: 28px;
		height: 21px;
		margin-top: 1px;
		padding: 0;
		background: transparent;
		border: 1px solid #363a45;
		border-radius: 3px;
	}

	.unit {
		position: absolute;
		top: 4px;
		left: 5px;
		width: 70px;
		height: 25px;
		box-sizing: border-box;
		padding: 0 3px;
		display: flex;
		align-items: center;
		justify-content: space-between;
		border: 1px solid #363a45;
		border-radius: 4px;
		font-size: 12.500px;
	}

	.price {
		position: absolute;
		left: 8px;
		transform: translateY(-50%);
		font-size: 12.500px;
		color: #a0a3ad;
	}

	.last {
		position: absolute;
		left: 0;
		top: 454px;
		width: 61px;
		height: 31px;
		box-sizing: border-box;
		padding-left: 8px;
		background: #fff;
		color: #131722;
		font-size: 12.500px;
		line-height: 14.500px;
		display: flex;
		flex-direction: column;
		justify-content: center;
	}

	.countdown {
		color: #555;
	}

	.vol-legend {
		position: absolute;
		left: 10px;
		top: 9px;
		font-size: 13px;
	}

	.vol-legend span {
		margin-left: 5px;
		color: #e04848;
	}

	.watermark {
		position: absolute;
		left: 12px;
		top: 44px;
		display: flex;
		align-items: center;
		gap: 6px;
		font-family: Inter, Roboto, sans-serif;
		font-size: 20.500px;
		font-weight: 600;
		line-height: 22px;
		letter-spacing: -0.4px;
	}

	.vol-scale {
		position: absolute;
		left: 8px;
		top: 20px;
		font-size: 12.500px;
		color: #a0a3ad;
	}

	.vol-tag {
		position: absolute;
		left: 0;
		top: 60px;
		width: 52px;
		height: 16px;
		line-height: 16px;
		padding-left: 8px;
		box-sizing: border-box;
		background: #ef5350;
		color: #fff;
		font-size: 12.500px;
	}

	.time {
		position: absolute;
		top: 6px;
		transform: translateX(-50%);
		font-size: 12.500px;
		color: #a0a3ad;
	}

	.gear {
		position: absolute;
		left: 33px;
		top: 6px;
	}

	.rangebar {
		height: 38px;
		display: flex;
		align-items: center;
		gap: 12.500px;
		padding-left: 15px;
		font-size: 14px;
	}

	.range-sep {
		margin-left: -2px;
	}

	.clock {
		margin-left: auto;
		margin-right: 6px;
		font-size: 13.800px;
		white-space: nowrap;
	}

	.bottom-strip {
		flex: 0 0 5px;
		background: #2a2e39;
	}

	.drawings {
		position: absolute;
		inset: 0;
		pointer-events: none;
	}

	.arrow {
		fill: none;
		stroke: #ff9800;
		stroke-width: 4.500;
		stroke-linejoin: miter;
	}

	.scribble {
		fill: none;
		stroke: #00ffff;
		stroke-width: 10;
		stroke-linecap: round;
		stroke-linejoin: round;
	}
</style>
